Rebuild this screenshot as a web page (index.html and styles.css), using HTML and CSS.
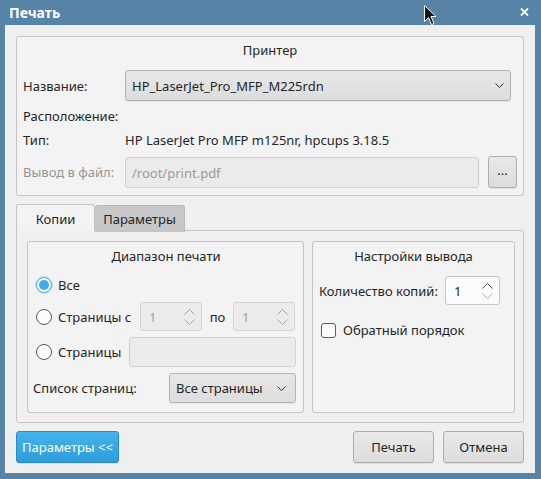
FILE: index.html
```html
<!DOCTYPE html>
<html lang="ru">
<head>
<meta charset="utf-8">
<title>Печать</title>
<link rel="stylesheet" href="styles.css">
</head>
<body>
<div class="window">
  <div class="titlebar">
    <span class="title">Печать</span>
    <svg class="close" width="9" height="8" viewBox="0 0 9 8"><path d="M1 0.5L8 7.5M8 0.5L1 7.5" stroke="#fff" stroke-width="1.8" fill="none"/></svg>
  </div>
  <div class="client">
    <section class="group printer">
      <div class="group-title">Принтер</div>
      <div class="prow name-row">
        <span class="plabel">Название:</span>
        <div class="combo printer-combo"><span>HP_LaserJet_Pro_MFP_M225rdn</span><svg width="9" height="5" viewBox="0 0 9 5"><path d="M0.5 0.5L4.5 4.5L8.5 0.5" fill="none" stroke="#333" stroke-width="1"/></svg></div>
      </div>
      <div class="prow loc-row"><span class="plabel">Расположение:</span></div>
      <div class="prow type-row"><span class="plabel">Тип:</span><span>HP LaserJet Pro MFP m125nr, hpcups 3.18.5</span></div>
      <div class="prow file-row">
        <span class="plabel muted">Вывод в файл:</span>
        <div class="input disabled file-input">/root/print.pdf</div>
        <div class="btn dots">...</div>
      </div>
    </section>

    <div class="tabs">
      <div class="tabbar">
        <div class="tab active">Копии</div>
        <div class="tab">Параметры</div>
      </div>
      <div class="pane">
        <section class="group range">
          <div class="group-title">Диапазон печати</div>
          <div class="rrow r1">
            <span class="radio checked"></span><span class="rtext">Все</span>
          </div>
          <div class="rrow r2">
            <div class="ritem w104"><span class="radio"></span><span class="rtext">Страницы с</span></div>
            <div class="spin disabled w62"><span>1</span><svg width="11" height="16" viewBox="0 0 11 16"><path d="M0.5 5.5L5.5 0.5L10.5 5.5M0.5 10.5L5.5 15.5L10.5 10.5" fill="none" stroke="#a4a4a4" stroke-width="1"/></svg></div>
            <span class="po">по</span>
            <div class="spin disabled w62"><span>1</span><svg width="11" height="16" viewBox="0 0 11 16"><path d="M0.5 5.5L5.5 0.5L10.5 5.5M0.5 10.5L5.5 15.5L10.5 10.5" fill="none" stroke="#a4a4a4" stroke-width="1"/></svg></div>
          </div>
          <div class="rrow r3">
            <div class="ritem w93"><span class="radio"></span><span class="rtext">Страницы</span></div>
            <div class="input disabled pages-input"></div>
          </div>
          <div class="rrow r4">
            <span class="list-label">Список страниц:</span>
            <div class="combo pages-combo"><span>Все страницы</span><svg width="9" height="5" viewBox="0 0 9 5"><path d="M0.5 0.5L4.5 4.5L8.5 0.5" fill="none" stroke="#333" stroke-width="1"/></svg></div>
          </div>
        </section>
        <section class="group output">
          <div class="group-title">Настройки вывода</div>
          <div class="orow copies">
            <span class="clabel">Количество копий:</span>
            <div class="spin enabled w55"><span>1</span><svg width="11" height="16" viewBox="0 0 11 16"><path d="M0.5 5.5L5.5 0.5L10.5 5.5" fill="none" stroke="#4a4a4a" stroke-width="1"/><path d="M0.5 10.5L5.5 15.5L10.5 10.5" fill="none" stroke="#b4b4b4" stroke-width="1"/></svg></div>
          </div>
          <div class="orow reverse">
            <span class="checkbox"></span><span class="ctext">Обратный порядок</span>
          </div>
        </section>
      </div>
    </div>

    <div class="buttons">
      <div class="btn primary">Параметры &lt;&lt;</div>
      <div class="spacer"></div>
      <div class="btn action">Печать</div>
      <div class="btn action">Отмена</div>
    </div>
  </div>
  <svg class="cursor" width="14" height="22" viewBox="0 0 14 22"><path d="M1.5 1.5L1.5 17.5L5.5 13.5L8.5 20.5L11 19.5L8 12.5L13 12.5Z" fill="#111" stroke="#fff" stroke-width="1"/></svg>
</div>
</body>
</html>
```

FILE: styles.css
```css
* { box-sizing: border-box; }
body {
  margin: 0;
  font-family: "Noto Sans", "Open Sans", sans-serif;
  font-size: 13px;
  color: #232627;
}
.window {
  width: 541px;
  height: 479px;
  background: #5783a6;
  display: flex;
  flex-direction: column;
  position: relative;
}
.titlebar {
  height: 25px;
  flex: none;
  display: flex;
  align-items: center;
  justify-content: space-between;
  padding: 0 12px 1px 9px;
  color: #fff;
  font-weight: bold;
  font-size: 14px;
}
.close { display: block; margin-top: -1px; }
.cursor { position: absolute; left: 423px; top: 4px; }

.client {
  flex: 1;
  margin: 0 6px 6px 5px;
  background: #efefef;
  padding: 11px 11px 10px;
  display: flex;
  flex-direction: column;
}

.group {
  border: 1px solid #c4c4c4;
  border-radius: 3px;
  background: #f3f3f3;
}
.group-title {
  text-align: center;
  height: 18px;
  line-height: 18px;
}

/* printer group */
.printer {
  height: 160px;
  flex: none;
  padding: 4px 6px 0;
}
.prow { display: flex; align-items: center; line-height: 18px; }
.plabel { width: 102px; flex: none; }
.muted { color: #939393; }
.name-row { height: 31px; margin-top: 11px; }
.loc-row { height: 30px; }
.type-row { height: 18px; }
.file-row { height: 32px; margin-top: 7px; }

.combo {
  display: flex;
  align-items: center;
  justify-content: space-between;
  border: 1px solid #b4b4b4;
  border-radius: 3px;
  background: linear-gradient(#e7e7e8, #dcdddd);
  box-shadow: 0 1px 0 rgba(0,0,0,0.06);
}
.printer-combo { width: 386px; height: 31px; padding: 0 6px 0 6px; }
.pages-combo { width: 127px; height: 30px; padding: 0 9px 0 6px; margin-left: auto; }

.input {
  border: 1px solid #d2d2d2;
  border-radius: 3px;
  height: 31px;
  display: flex;
  align-items: center;
  padding: 0 6px;
}
.input.disabled { background: #ebebeb; color: #9a9a9a; }
.file-input { flex: 1; align-self: flex-start; margin-top: 1px; color: #8e8e8e; }

.btn {
  display: flex;
  align-items: center;
  justify-content: center;
  border: 1px solid #adadad;
  border-radius: 3px;
  background: linear-gradient(#e9e9ea, #dcdcdd);
  box-shadow: 0 1px 0 rgba(0,0,0,0.08);
}
.dots { width: 29px; height: 32px; margin-left: 9px; padding-bottom: 4px; }

/* tabs */
.tabs { margin-top: 8px; display: flex; flex-direction: column; }
.tabbar { display: flex; height: 27px; position: relative; z-index: 1; margin-bottom: -1px; }
.tab {
  height: 26px;
  margin-top: 1px;
  display: flex;
  align-items: center;
  justify-content: center;
  border: 1px solid #bcbcbc;
  border-bottom: none;
  border-radius: 3px 3px 0 0;
}
.tab.active {
  width: 79px;
  height: 27px;
  margin-top: 0;
  background: #f3f3f3;
  border-color: #c4c4c4;
  padding-top: 2px;
}
.tab:not(.active) {
  width: 90px;
  background: #c7c7c7;
  border-left: none;
  border-bottom: 1px solid #c4c4c4;
  height: 27px;
  padding-top: 1px;
}
.pane {
  height: 193px;
  background: #f0f0f0;
  border: 1px solid #c4c4c4;
  border-radius: 0 3px 3px 3px;
  padding: 10px 8px 9px 10px;
  display: flex;
  gap: 8px;
}

/* range group */
.range { width: 277px; flex: none; height: 172px; padding: 5px 7px 0 8px; }
.rrow { display: flex; align-items: center; }
.r1 { height: 30px; margin-top: 5px; }
.r2 { height: 29px; margin-top: 2px; }
.r3 { height: 30px; margin-top: 6px; }
.r4 { height: 30px; margin-top: 6px; margin-left: -3px; }
.ritem { display: flex; align-items: center; flex: none; }
.w104 { width: 104px; }
.w93 { width: 93px; }
.radio {
  width: 16px;
  height: 16px;
  border-radius: 50%;
  border: 1px solid #555a5e;
  background: #fcfcfc;
  flex: none;
  position: relative;
}
.radio.checked {
  border-color: #3daee9;
  background: #fff;
  box-shadow: 0 0 0 1px rgba(61,174,233,0.25);
}
.radio.checked::after {
  content: "";
  position: absolute;
  left: 2px; top: 2px;
  width: 10px; height: 10px;
  border-radius: 50%;
  background: #3daee9;
}
.rtext { margin-left: 6px; }

.spin {
  height: 29px;
  border-radius: 3px;
  display: flex;
  align-items: center;
  justify-content: space-between;
  padding: 0 6px 0 8px;
}
.spin.disabled { background: #ebebeb; border: 1px solid #d4d4d4; color: #a0a0a0; }
.spin.enabled { background: #fcfcfc; border: 1px solid #c4c4c4; color: #232627; }
.w62 { width: 62px; }
.w55 { width: 55px; }
.po { width: 31px; text-align: center; flex: none; }
.pages-input { flex: 1; height: 30px; }
.list-label { flex: none; }

/* output group */
.output { flex: 1; height: 172px; padding: 5px 6px 0 6px; }
.orow { display: flex; align-items: center; }
.copies { height: 29px; margin-top: 11px; }
.clabel { width: 126px; flex: none; }
.reverse { height: 20px; margin-top: 15px; padding-left: 2px; }
.checkbox {
  width: 15px;
  height: 15px;
  border: 1px solid #5b5e61;
  border-radius: 3px;
  background: #fcfcfc;
  flex: none;
}
.ctext { margin-left: 7px; }

/* bottom buttons */
.buttons { display: flex; height: 32px; margin-top: 8px; gap: 9px; }
.spacer { flex: 1; }
.btn.primary {
  width: 103px;
  background: linear-gradient(#43b3ec, #2f9ddb);
  border-color: #2a8bc4;
  color: #fff;
}
.btn.action { width: 81px; }
```
